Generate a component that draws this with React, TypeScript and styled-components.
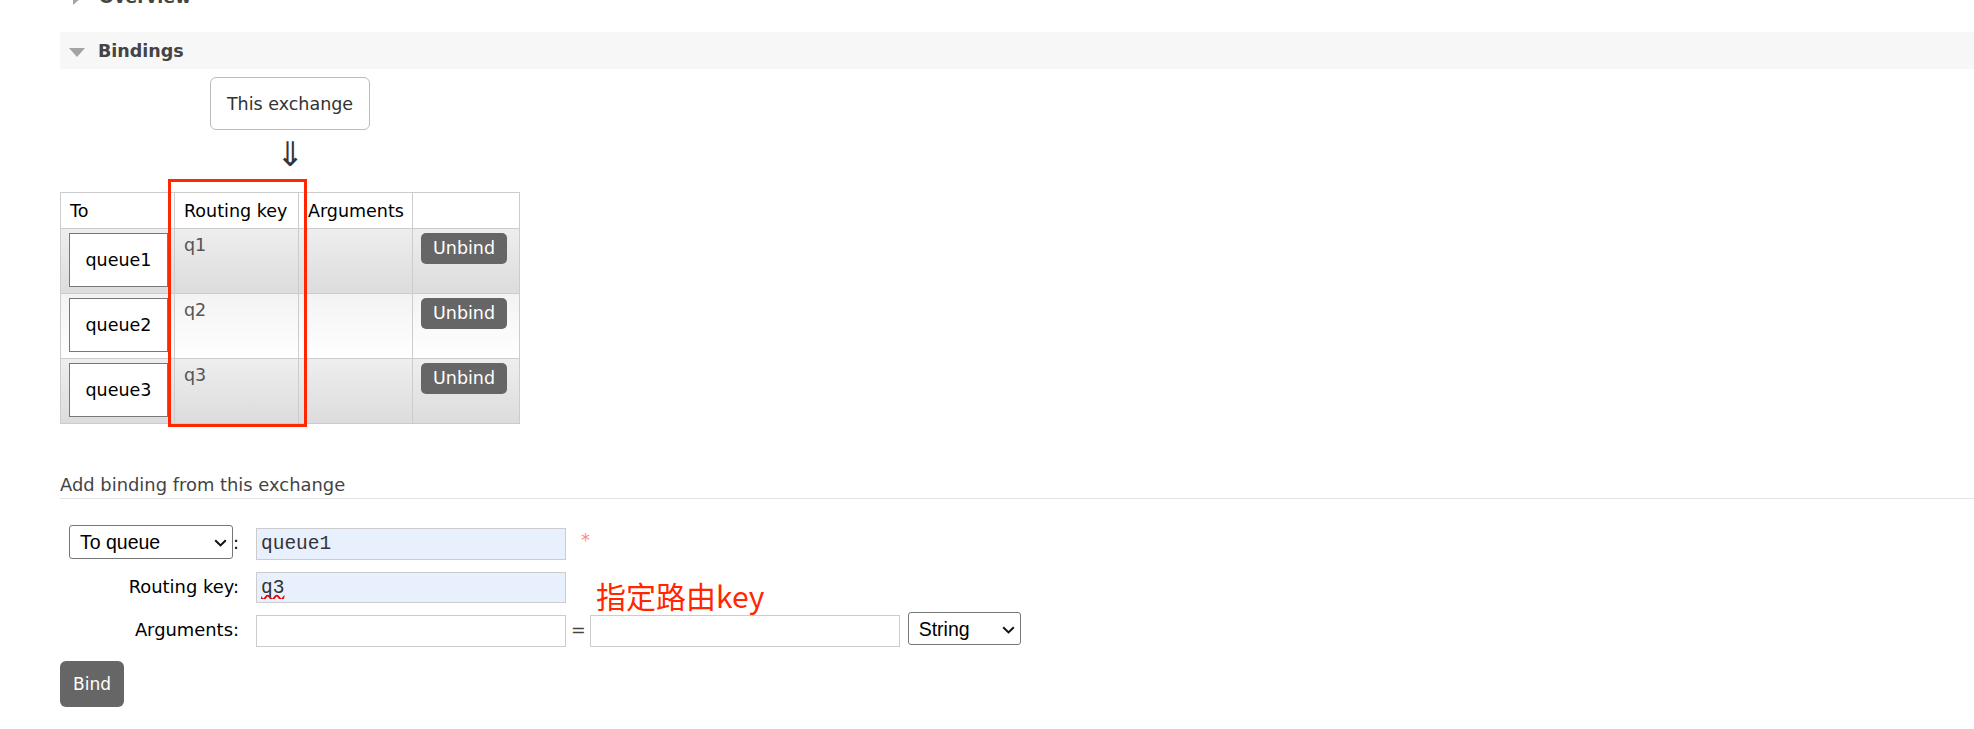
import React from 'react';
import styled, { createGlobalStyle, css } from 'styled-components';

const GlobalStyle = createGlobalStyle`
  html, body {
    margin: 0;
    padding: 0;
    background: #fff;
  }
  body {
    font-family: "DejaVu Sans", Verdana, sans-serif;
    font-size: 17.5px;
    color: #000;
    overflow: hidden;
  }
`;

const Page = styled.div`
  padding-left: 60px;
`;

const SectionHeader = styled.h2<{ $open?: boolean }>`
  display: flex;
  align-items: center;
  height: 37px;
  margin: 0;
  padding-left: 9px;
  font-size: 17.5px;
  font-weight: bold;
  color: #444;
  background: ${(p) => (p.$open ? '#f7f7f7' : 'transparent')};
  ${(p) =>
    !p.$open &&
    css`
      margin-top: -22px;
      margin-bottom: 17px;
    `}
`;

const Toggle = styled.span<{ $open?: boolean }>`
  width: 0;
  height: 0;
  ${(p) =>
    p.$open
      ? css`
          margin: 3px 13px 0 0;
          border-left: 8.5px solid transparent;
          border-right: 8.5px solid transparent;
          border-top: 9px solid #a3a3a3;
        `
      : css`
          margin: 0 17px 0 4px;
          border-top: 8.5px solid transparent;
          border-bottom: 8.5px solid transparent;
          border-left: 9px solid #a3a3a3;
        `}
`;

const Diagram = styled.div`
  position: relative;
  display: flex;
  flex-direction: column;
  align-items: center;
  width: fit-content;
  margin-top: 8px;
`;

const ExchangeBox = styled.div`
  display: flex;
  align-items: center;
  box-sizing: border-box;
  height: 53px;
  padding: 0 16px;
  border: 1px solid #bbb;
  border-radius: 6px;
  color: #333;
`;

const Arrow = styled.div`
  height: 62px;
  box-sizing: border-box;
  padding-top: 7px;
  font-size: 34px;
  line-height: 1;
  color: #333;
`;

const BindingTable = styled.table`
  width: 459px;
  table-layout: fixed;
  border-collapse: collapse;
  border: 1px solid #ccc;
`;

const HeadCell = styled.th`
  height: 35px;
  padding: 0 9px;
  border: 1px solid #ccc;
  background: #fff;
  text-align: left;
  font-weight: normal;
  white-space: nowrap;
`;

const Row = styled.tr<{ $alt?: boolean }>`
  height: 65px;
  background: ${(p) =>
    p.$alt ? 'linear-gradient(#f3f3f3, #fff)' : 'linear-gradient(#eeeeee, #dcdcdc)'};
`;

const Cell = styled.td`
  box-sizing: border-box;
  padding: 4px 8px;
  border: 1px solid #ccc;
  vertical-align: top;
`;

const KeyCell = styled(Cell)`
  padding-left: 9px;
  line-height: 24px;
  color: #555;
`;

const QueueLink = styled.span`
  display: flex;
  align-items: center;
  justify-content: center;
  box-sizing: border-box;
  width: 99px;
  height: 54px;
  border: 1px solid #777;
  background: #fff;
  color: #000;
`;

const SmallButton = styled.button`
  padding: 5px 12px;
  border: none;
  border-radius: 5px;
  background: #666;
  color: #fff;
  font: inherit;
  line-height: 20.7px;
`;

const Highlight = styled.div`
  position: absolute;
  left: 108px;
  top: 102px;
  width: 139px;
  height: 248px;
  box-sizing: border-box;
  border: 3px solid #ff2600;
  pointer-events: none;
`;

const SubHeading = styled.h3`
  margin: 50px 0 0;
  padding-bottom: 3px;
  border-bottom: 1px solid #e3e3e3;
  font-size: 17.9px;
  font-weight: normal;
  color: #444;
`;

const Form = styled.form`
  margin-top: 26px;
`;

const FormRow = styled.div<{ $space?: number }>`
  position: relative;
  display: flex;
  align-items: baseline;
  margin-top: ${(p) => p.$space ?? 0}px;
`;

const Label = styled.label`
  display: flex;
  align-items: center;
  justify-content: flex-end;
  flex-shrink: 0;
  width: 179px;
  margin-right: 17px;
  font-size: 17.9px;
  white-space: nowrap;
`;

const SelectWrap = styled.span<{ $gap?: number }>`
  position: relative;
  display: inline-flex;
  margin-left: ${(p) => p.$gap ?? 0}px;
`;

const Select = styled.select<{ $w: number; $h: number }>`
  appearance: none;
  box-sizing: border-box;
  width: ${(p) => p.$w}px;
  height: ${(p) => p.$h}px;
  padding: 0 24px 0 10px;
  border: 1px solid #767676;
  border-radius: 3px;
  background: #fff;
  color: #000;
  font-family: "Liberation Sans", Arial, sans-serif;
  font-size: 19.5px;
`;

const Chevron = styled.svg`
  position: absolute;
  right: 6px;
  top: 50%;
  width: 13px;
  height: 8px;
  margin-top: -3px;
  pointer-events: none;
`;

const TextInput = styled.input<{ $filled?: boolean; $typo?: boolean }>`
  box-sizing: border-box;
  width: 310px;
  height: 31.5px;
  padding: 0 4px;
  border: 1px solid #ccc;
  background: ${(p) => (p.$filled ? '#e8f0fe' : '#fff')};
  color: #333;
  font-family: "Liberation Mono", "Courier New", monospace;
  font-size: 19.5px;
  outline: none;
  ${(p) =>
    p.$typo &&
    css`
      text-decoration: underline wavy #e00;
      text-decoration-skip-ink: none;
      text-underline-offset: 2px;
    `}
`;

const Required = styled.span`
  align-self: flex-start;
  margin: 6px 0 0 15px;
  font-size: 18px;
  line-height: 1;
  color: #f88;
`;

const Equals = styled.span`
  margin: 0 4px 0 5px;
  color: #444;
`;

const Note = styled.span`
  position: absolute;
  left: 536px;
  top: 8px;
  font-family: "Noto Sans CJK SC", "DejaVu Sans", sans-serif;
  font-size: 30px;
  line-height: 30px;
  color: #ff2600;
  white-space: nowrap;
`;

const BindButton = styled.button`
  margin-top: 14px;
  height: 46px;
  padding: 0 13px;
  border: none;
  border-radius: 6px;
  background: #666;
  color: #fff;
  font-family: "DejaVu Sans", Verdana, sans-serif;
  font-size: 17px;
`;

type DropdownProps = {
  width: number;
  height: number;
  gap?: number;
  value: string;
  options: [string, string][];
};

function Dropdown({ width, height, gap, value, options }: DropdownProps) {
  return (
    <SelectWrap $gap={gap}>
      <Select $w={width} $h={height} defaultValue={value}>
        {options.map(([v, label]) => (
          <option key={v} value={v}>
            {label}
          </option>
        ))}
      </Select>
      <Chevron viewBox="0 0 13 8" fill="none">
        <path d="M1.2 1.2 L6.5 6.4 L11.8 1.2" stroke="#111" strokeWidth="2" />
      </Chevron>
    </SelectWrap>
  );
}

const bindings = [
  { queue: 'queue1', key: 'q1' },
  { queue: 'queue2', key: 'q2' },
  { queue: 'queue3', key: 'q3' },
];

export default function App() {
  return (
    <>
      <GlobalStyle />
      <Page>
        <SectionHeader>
          <Toggle />
          Overview
        </SectionHeader>
        <SectionHeader $open>
          <Toggle $open />
          Bindings
        </SectionHeader>

        <Diagram>
          <ExchangeBox>This exchange</ExchangeBox>
          <Arrow>⇓</Arrow>
          <BindingTable>
            <colgroup>
              <col style={{ width: 114 }} />
              <col style={{ width: 124 }} />
              <col style={{ width: 114 }} />
              <col style={{ width: 107 }} />
            </colgroup>
            <thead>
              <tr>
                <HeadCell>To</HeadCell>
                <HeadCell>Routing key</HeadCell>
                <HeadCell>Arguments</HeadCell>
                <HeadCell />
              </tr>
            </thead>
            <tbody>
              {bindings.map((b, i) => (
                <Row key={b.queue} $alt={i % 2 === 1}>
                  <Cell>
                    <QueueLink>{b.queue}</QueueLink>
                  </Cell>
                  <KeyCell>{b.key}</KeyCell>
                  <Cell />
                  <Cell>
                    <SmallButton type="button">Unbind</SmallButton>
                  </Cell>
                </Row>
              ))}
            </tbody>
          </BindingTable>
          <Highlight />
        </Diagram>

        <SubHeading>Add binding from this exchange</SubHeading>
        <Form onSubmit={(e) => e.preventDefault()}>
          <FormRow>
            <Label>
              <Dropdown
                width={164}
                height={34}
                value="queue"
                options={[
                  ['queue', 'To queue'],
                  ['exchange', 'To exchange'],
                ]}
              />
              :
            </Label>
            <TextInput $filled defaultValue="queue1" spellCheck={false} />
            <Required>*</Required>
          </FormRow>
          <FormRow $space={12}>
            <Label>Routing key:</Label>
            <TextInput $filled $typo defaultValue="q3" spellCheck={false} />
            <Note>指定路由key</Note>
          </FormRow>
          <FormRow $space={9}>
            <Label>Arguments:</Label>
            <TextInput />
            <Equals>=</Equals>
            <TextInput />
            <Dropdown
              width={113}
              height={33}
              gap={8}
              value="string"
              options={[
                ['string', 'String'],
                ['number', 'Number'],
                ['boolean', 'Boolean'],
              ]}
            />
          </FormRow>
          <BindButton type="submit">Bind</BindButton>
        </Form>
      </Page>
    </>
  );
}
